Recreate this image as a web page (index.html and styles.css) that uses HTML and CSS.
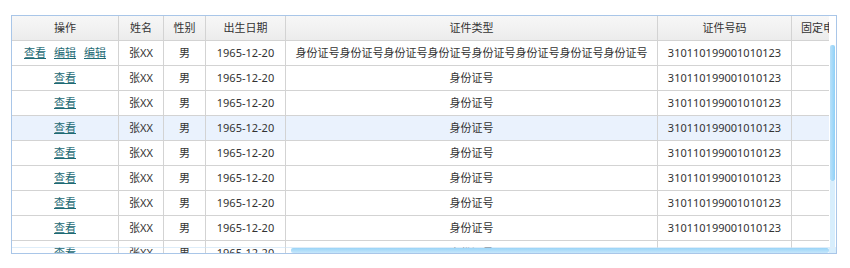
FILE: index.html
```html
<!DOCTYPE html>
<html lang="zh-CN">
<head>
<meta charset="utf-8">
<title>Grid</title>
<link rel="stylesheet" href="styles.css">
</head>
<body>
<div class="grid">
  <div class="viewport">
    <div class="row head">
      <div class="c c1">操作</div>
      <div class="c c2">姓名</div>
      <div class="c c3">性别</div>
      <div class="c c4">出生日期</div>
      <div class="c c5">证件类型</div>
      <div class="c c6">证件号码</div>
      <div class="c c7">固定电话</div>
    </div>
    <div class="row">
      <div class="c c1"><a href="#">查看</a><a href="#">编辑</a><a href="#">编辑</a></div>
      <div class="c c2">张XX</div>
      <div class="c c3">男</div>
      <div class="c c4">1965-12-20</div>
      <div class="c c5">身份证号身份证号身份证号身份证号身份证号身份证号身份证号身份证号</div>
      <div class="c c6">310110199001010123</div>
      <div class="c c7"></div>
    </div>
    <div class="row">
      <div class="c c1"><a href="#">查看</a></div>
      <div class="c c2">张XX</div>
      <div class="c c3">男</div>
      <div class="c c4">1965-12-20</div>
      <div class="c c5">身份证号</div>
      <div class="c c6">310110199001010123</div>
      <div class="c c7"></div>
    </div>
    <div class="row">
      <div class="c c1"><a href="#">查看</a></div>
      <div class="c c2">张XX</div>
      <div class="c c3">男</div>
      <div class="c c4">1965-12-20</div>
      <div class="c c5">身份证号</div>
      <div class="c c6">310110199001010123</div>
      <div class="c c7"></div>
    </div>
    <div class="row hover">
      <div class="c c1"><a href="#">查看</a></div>
      <div class="c c2">张XX</div>
      <div class="c c3">男</div>
      <div class="c c4">1965-12-20</div>
      <div class="c c5">身份证号</div>
      <div class="c c6">310110199001010123</div>
      <div class="c c7"></div>
    </div>
    <div class="row">
      <div class="c c1"><a href="#">查看</a></div>
      <div class="c c2">张XX</div>
      <div class="c c3">男</div>
      <div class="c c4">1965-12-20</div>
      <div class="c c5">身份证号</div>
      <div class="c c6">310110199001010123</div>
      <div class="c c7"></div>
    </div>
    <div class="row">
      <div class="c c1"><a href="#">查看</a></div>
      <div class="c c2">张XX</div>
      <div class="c c3">男</div>
      <div class="c c4">1965-12-20</div>
      <div class="c c5">身份证号</div>
      <div class="c c6">310110199001010123</div>
      <div class="c c7"></div>
    </div>
    <div class="row">
      <div class="c c1"><a href="#">查看</a></div>
      <div class="c c2">张XX</div>
      <div class="c c3">男</div>
      <div class="c c4">1965-12-20</div>
      <div class="c c5">身份证号</div>
      <div class="c c6">310110199001010123</div>
      <div class="c c7"></div>
    </div>
    <div class="row">
      <div class="c c1"><a href="#">查看</a></div>
      <div class="c c2">张XX</div>
      <div class="c c3">男</div>
      <div class="c c4">1965-12-20</div>
      <div class="c c5">身份证号</div>
      <div class="c c6">310110199001010123</div>
      <div class="c c7"></div>
    </div>
    <div class="row">
      <div class="c c1"><a href="#">查看</a></div>
      <div class="c c2">张XX</div>
      <div class="c c3">男</div>
      <div class="c c4">1965-12-20</div>
      <div class="c c5">身份证号</div>
      <div class="c c6">310110199001010123</div>
      <div class="c c7"></div>
    </div>
  </div>
  <div class="vbar"><div class="vthumb"></div></div>
  <div class="hbar"><div class="hthumb"></div></div>
</div>
</body>
</html>
```
FILE: styles.css
```css
html, body {
  margin: 0;
  padding: 0;
  background: #ffffff;
}
body {
  padding: 15px 0 0 11px;
  font-family: "Noto Sans", "Noto Sans CJK SC", sans-serif;
  font-size: 11px;
  color: #333333;
}
.grid {
  position: relative;
  width: 824px;
  height: 237px;
  border: 1px solid #a9c6e8;
  overflow: hidden;
}
.viewport {
  width: 817px;
  height: 237px;
  overflow: hidden;
}
.row {
  display: flex;
  height: 24px;
  border-bottom: 1px solid #d3d3d3;
  width: 900px;
}
.row.head {
  background: linear-gradient(#f7f7f7, #ececec);
}
.row.hover {
  background: #eaf2fd;
}
.c {
  flex: none;
  box-sizing: border-box;
  border-right: 1px solid #d3d3d3;
  display: flex;
  align-items: center;
  justify-content: center;
  white-space: nowrap;
  overflow: hidden;
  line-height: 24px;
}
.c1 { width: 107px; }
.c2 { width: 45px; }
.c3 { width: 42px; }
.c4 { width: 80px; }
.c5 { width: 372px; }
.c6 { width: 134px; }
.c7 { width: 100px; justify-content: flex-start; padding-left: 9px; }
.c1 a {
  color: #1d6a74;
  text-decoration: underline;
  margin: 0 4px;
}
.vbar {
  position: absolute;
  left: 817px;
  top: 0;
  width: 7px;
  height: 231px;
  background: #ffffff;
}
.vthumb {
  position: absolute;
  left: 1px;
  top: 29px;
  width: 5px;
  height: 136px;
  border-radius: 2px;
  background: linear-gradient(90deg, #b9e1fa, #8fd0f7);
}
.vbar::after {
  content: "";
  position: absolute;
  left: 1px;
  top: 165px;
  width: 5px;
  bottom: 0;
  background: #d8eefc;
}
.hbar {
  position: absolute;
  left: 0;
  top: 231px;
  width: 824px;
  height: 6px;
  border-top: 1px solid rgba(200, 225, 245, 0.6);
  box-sizing: border-box;
}
.hthumb {
  position: absolute;
  left: 279px;
  top: 0;
  width: 538px;
  height: 5px;
  border-radius: 2px;
  background: linear-gradient(#9ad4f7, #c6e7fb);
}
.hbar::after {
  content: "";
  position: absolute;
  left: 817px;
  top: 0;
  width: 7px;
  height: 5px;
  background: #d8eefc;
}
```
